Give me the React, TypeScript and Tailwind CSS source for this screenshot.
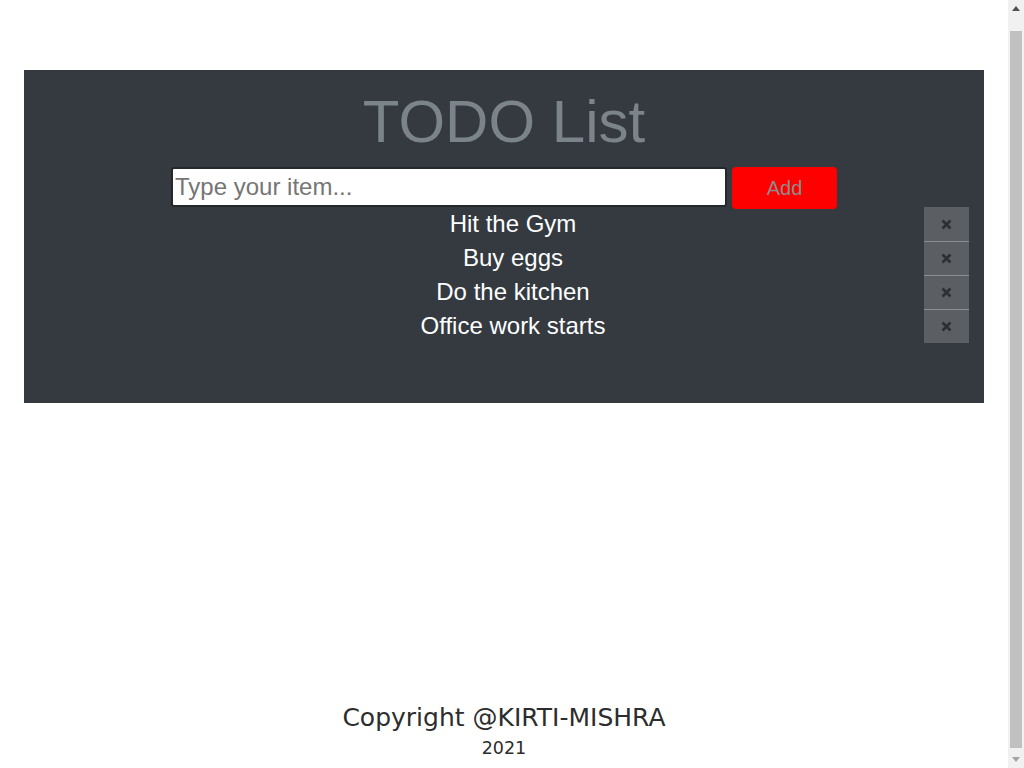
const items = ['Hit the Gym', 'Buy eggs', 'Do the kitchen', 'Office work starts'];

function Scrollbar() {
  return (
    <div className="flex h-full w-4 shrink-0 flex-col bg-[#f1f1f1]">
      <div className="flex h-[17px] items-center justify-center">
        <svg width="8" height="5" viewBox="0 0 8 5">
          <path d="M0 5 L4 0 L8 5 Z" fill="#505050" />
        </svg>
      </div>
      <div className="h-[14px]" />
      <div className="mx-[2px] flex-1 bg-[#c1c1c1]" />
      <div className="h-[3px]" />
      <div className="flex h-[17px] items-center justify-center">
        <svg width="8" height="5" viewBox="0 0 8 5">
          <path d="M0 0 L8 0 L4 5 Z" fill="#a3a3a3" />
        </svg>
      </div>
    </div>
  );
}

export default function App() {
  return (
    <div className="flex h-[768px] overflow-hidden bg-white font-['Liberation_Sans',Arial,sans-serif]">
      <div className="flex flex-1 flex-col">
        <div className="h-[70px] shrink-0" />
        <div className="mx-6 bg-[#343a40] pt-[22px] pb-[60px]">
          <h1 className="text-center text-[60px] leading-none text-[#7b838b]">TODO List</h1>
          <div className="mt-[15px] flex h-10 items-start justify-center gap-[5px]">
            <input
              type="text"
              placeholder="Type your item..."
              className="h-10 w-[556px] rounded-[3px] border-2 border-[#24282b] bg-white px-[2px] text-2xl text-black outline-none placeholder:text-[#757575]"
            />
            <button className="h-[42px] w-[105px] rounded-[4px] bg-[#ff0000] text-xl text-[#8c8c8c]">
              Add
            </button>
          </div>
          <ul className="pr-[15px]">
            {items.map((item, i) => (
              <li key={item} className="flex h-[34px] items-center">
                <span className="flex-1 pl-[78px] text-center text-2xl text-white">{item}</span>
                <button
                  className={
                    'flex h-[34px] w-[45px] items-center justify-center bg-[#5b5f63] ' +
                    (i > 0 ? 'border-t border-[#8b8f92]' : '')
                  }
                >
                  <svg width="11" height="11" viewBox="0 0 11 11">
                    <path d="M1.5 1.5 L9.5 9.5 M9.5 1.5 L1.5 9.5" stroke="#2c3034" strokeWidth="2.6" />
                  </svg>
                </button>
              </li>
            ))}
          </ul>
        </div>
        <footer className="mt-auto pb-[8px] text-center font-['DejaVu_Sans',Verdana,sans-serif] text-[#2d2d2d]">
          <p className="text-[25px] leading-[30px]">Copyright @KIRTI-MISHRA</p>
          <p className="mt-[3px] text-[17.5px] leading-[24px]">2021</p>
        </footer>
      </div>
      <Scrollbar />
    </div>
  );
}
